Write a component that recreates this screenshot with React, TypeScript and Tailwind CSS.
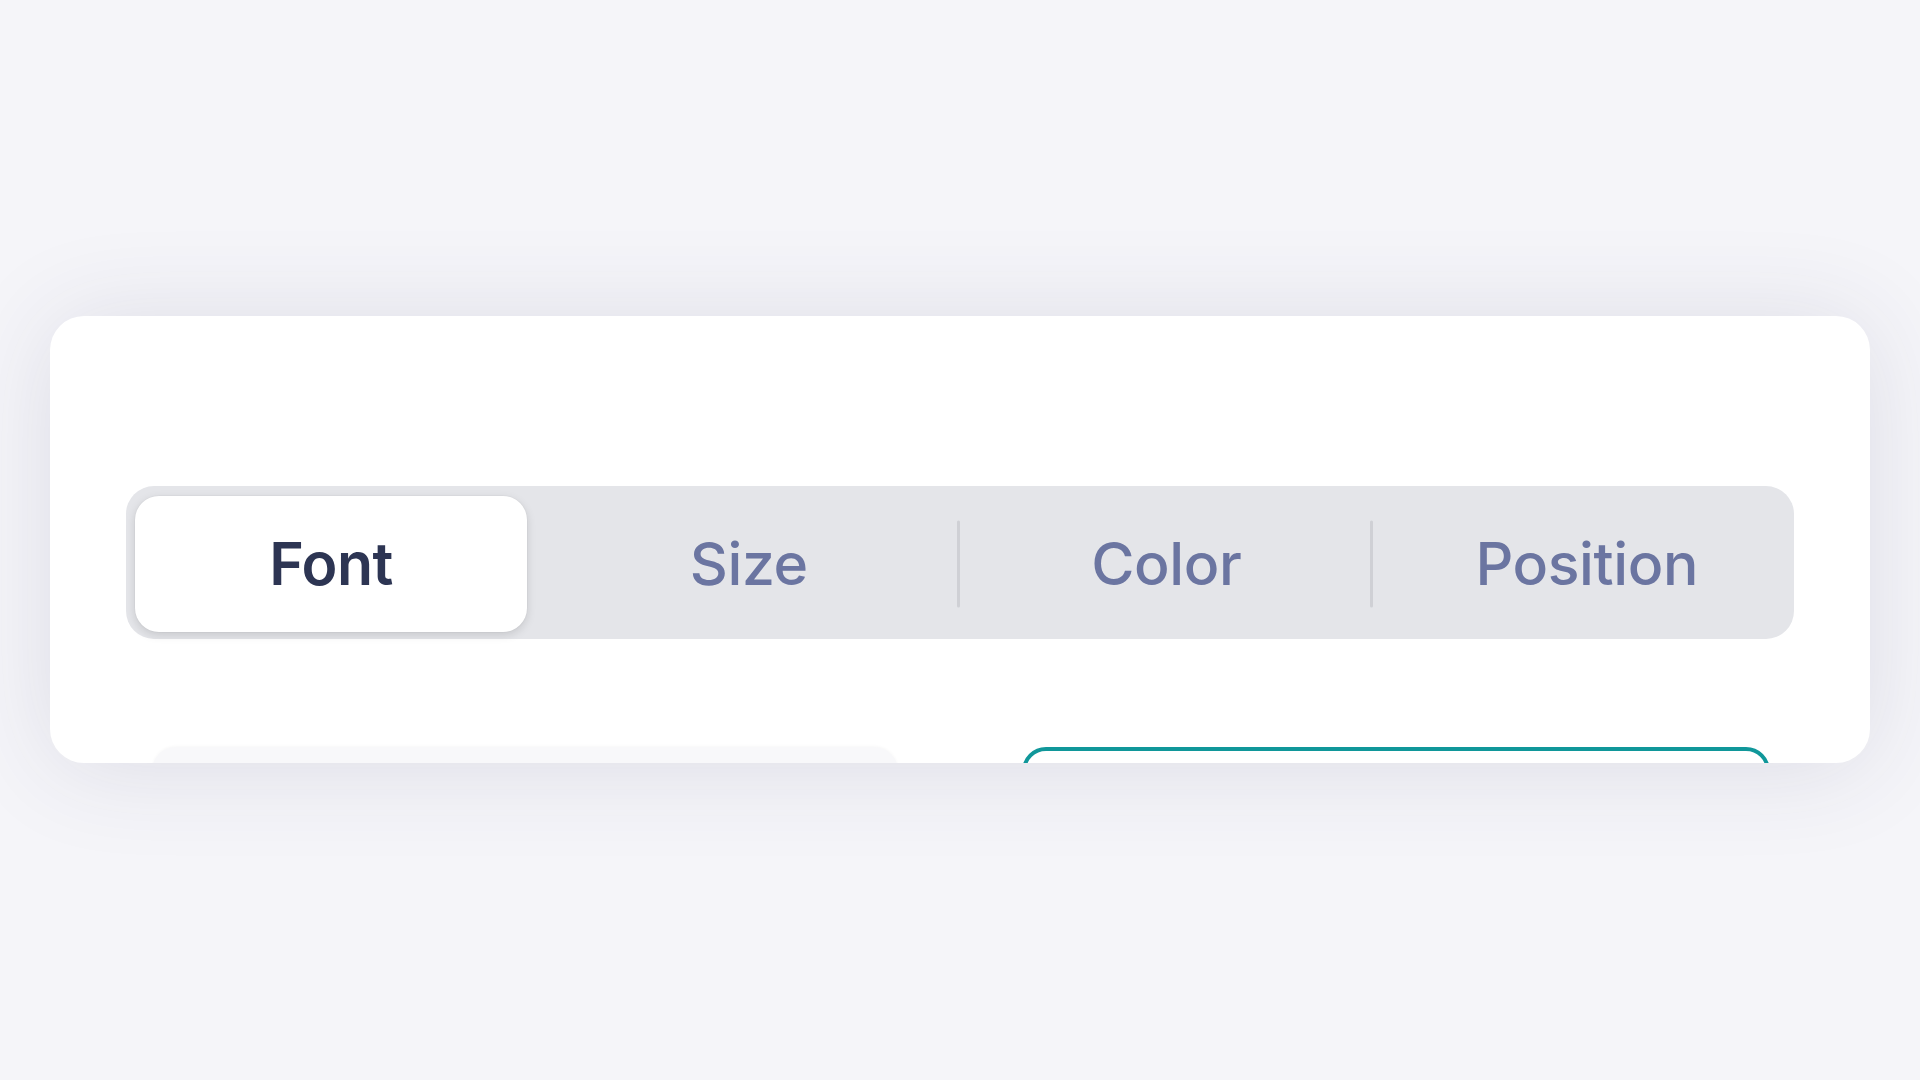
import React from "react";

const tabs = [
  { t: "Font", cls: "" },
  { t: "Size", cls: "pr-[10px]" },
  { t: "Color", cls: "" },
  { t: "Position", cls: "pl-[16px]" },
];

export default function App() {
  return (
    <div
      className="w-[1920px] h-[1080px] bg-[#f5f5f9] overflow-hidden pt-[316px] pl-[50px]"
      style={{ fontFamily: "Inter, 'Noto Sans', sans-serif" }}
    >
      <div className="w-[1820px] h-[447px] bg-white rounded-[34px] overflow-hidden shadow-[0_4px_100px_rgba(50,50,90,0.12)] pt-[170px] px-[76px]">
        <div className="h-[153px] bg-[#e4e5e9] rounded-[28px] p-[9px] pt-[10px] pb-[7px] grid grid-cols-4">
          {tabs.map(({ t, cls }, i) => (
            <div key={t} className="relative flex items-center">
              {i >= 2 && (
                <span className="absolute left-[-3px] top-1/2 -translate-y-1/2 h-[87px] w-[3px] bg-[#cfd0d5] rounded-full" />
              )}
              {i === 0 ? (
                <div className="w-[392px] h-full bg-white rounded-[24px] shadow-[0_3px_10px_rgba(0,0,0,0.13),0_0_0_1px_rgba(0,0,0,0.02)] flex items-center justify-center text-[59px] font-semibold text-[#2d3553] tracking-[-0.5px]">
                  {t}
                </div>
              ) : (
                <div className={`w-full h-full flex items-center justify-center text-[59px] font-medium text-[#6b75a1] tracking-[-0.4px] ${cls}`}>
                  {t}
                </div>
              )}
            </div>
          ))}
        </div>
        <div className="flex pt-[108px] pl-[26px] gap-[124px]">
          <div className="w-[746px] h-[80px] bg-[#f8f8fa] rounded-[24px] shadow-[0_-1px_3px_rgba(0,0,0,0.03)]" />
          <div className="w-[748px] h-[80px] bg-white rounded-[24px] border-[4px] border-[#10979a]" />
        </div>
      </div>
    </div>
  );
}
